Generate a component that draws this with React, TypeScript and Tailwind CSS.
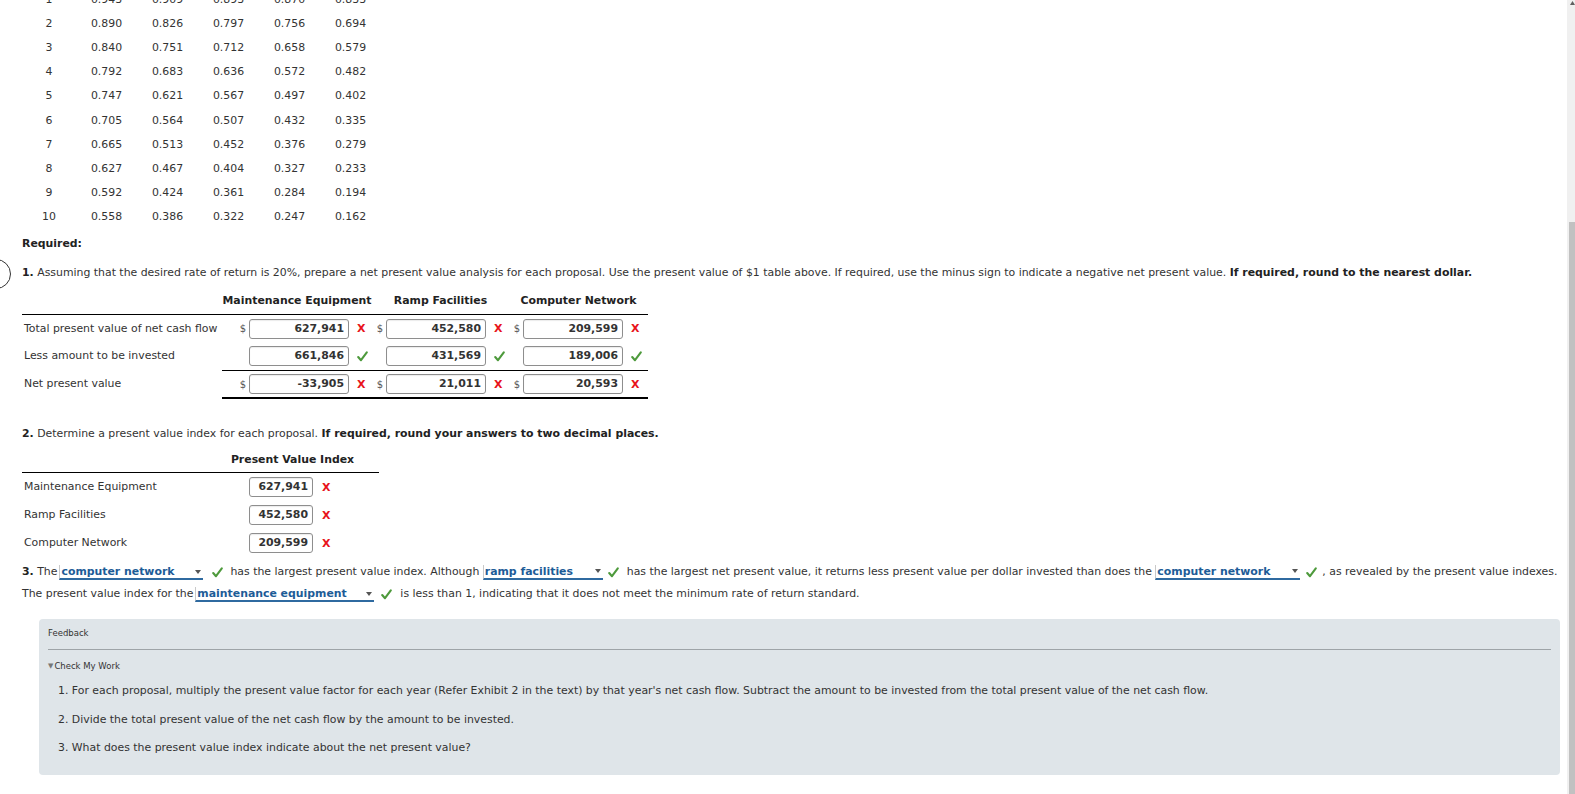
import React from "react";

const years: [string, string[]][] = [
  ["1", ["0.943", "0.909", "0.893", "0.870", "0.833"]],
  ["2", ["0.890", "0.826", "0.797", "0.756", "0.694"]],
  ["3", ["0.840", "0.751", "0.712", "0.658", "0.579"]],
  ["4", ["0.792", "0.683", "0.636", "0.572", "0.482"]],
  ["5", ["0.747", "0.621", "0.567", "0.497", "0.402"]],
  ["6", ["0.705", "0.564", "0.507", "0.432", "0.335"]],
  ["7", ["0.665", "0.513", "0.452", "0.376", "0.279"]],
  ["8", ["0.627", "0.467", "0.404", "0.327", "0.233"]],
  ["9", ["0.592", "0.424", "0.361", "0.284", "0.194"]],
  ["10", ["0.558", "0.386", "0.322", "0.247", "0.162"]],
];

function Cross() {
  return <span className="text-[11px] font-bold leading-none text-[#e8141b]">X</span>;
}

function Check() {
  return (
    <svg width="11" height="11" viewBox="0 0 11 11" className="inline-block">
      <path d="M1.2 6 L4 9.2 L9.8 1.3" fill="none" stroke="#4e9a3c" strokeWidth="2.1" strokeLinecap="round" strokeLinejoin="round" />
    </svg>
  );
}

function Box({ v, w }: { v: string; w: string }) {
  return (
    <div className={`${w} h-[20px] rounded-[3px] border border-[#8e8e8e] bg-white pr-[4px] text-right font-bold leading-[18px] text-[#333] shadow-[inset_0_1px_1px_rgba(0,0,0,0.08)]`}>
      {v}
    </div>
  );
}

function MoneyRow({ label, vals, ok, dollar, h }: { label: string; vals: string[]; ok: boolean; dollar: boolean; h: string }) {
  return (
    <div className={`grid w-[626px] grid-cols-[200px_27px_100px_23px_14px_100px_23px_14px_100px_25px] items-center ${h}`}>
      <div className="pl-[2px]">{label}</div>
      {vals.map((v, i) => (
        <React.Fragment key={i}>
          <div className="pr-[3px] text-right text-[10px] text-[#555]">{dollar ? "$" : ""}</div>
          <Box v={v} w="w-[100px]" />
          <div className="flex items-center pl-[8px]">{ok ? <Check /> : <Cross />}</div>
        </React.Fragment>
      ))}
    </div>
  );
}

function Drop({ label, w }: { label: string; w: string }) {
  return (
    <span className={`inline-flex ${w} h-[15px] items-center justify-between border-b-2 border-l border-b-[#2f6aa0] border-l-[#c9c9c9] pl-[1px] pr-[2px] font-bold leading-[13px] text-[#1d5c97]`}>
      <span>{label}</span>
      <svg width="6" height="4" viewBox="0 0 6 4">
        <path d="M0 0 L6 0 L3 4 Z" fill="#555" />
      </svg>
    </span>
  );
}

export default function App() {
  return (
    <div className="flex h-[794px] w-[1575px] overflow-hidden bg-white font-['DejaVu_Sans',sans-serif] text-[10.9px] text-[#333]">
      <main className="relative flex flex-1 flex-col pl-[22px]">
        {/* present value table */}
        <div className="mt-[-12px] flex flex-col">
          {years.map(([y, vals]) => (
            <div key={y} className="flex h-[24.125px] items-center">
              <div className="w-[54px] text-center">{y}</div>
              {vals.map((v, i) => (
                <div key={i} className="w-[61px] text-center">{v}</div>
              ))}
            </div>
          ))}
        </div>

        <div className="mt-[7px] font-bold leading-[16px] text-[#222]">Required:</div>

        <div className="relative mt-[13px] leading-[16px]">
          <div className="absolute left-[-41px] top-[-6px] h-[30px] w-[30px] rounded-full border-[1.5px] border-[#333]" />
          <span className="font-bold text-[#222]">1.</span> Assuming that the desired rate of return is 20%, prepare a net present value analysis for each proposal. Use the present value of $1 table above. If required, use the minus sign to indicate a negative net present value.{" "}
          <span className="font-bold text-[#222]">If required, round to the nearest dollar.</span>
        </div>

        {/* table 1 */}
        <div className="mt-[11px] flex flex-col">
          <div className="grid h-[23px] w-[626px] grid-cols-[200px_150px_137px_139px] border-b border-black pt-[1px] font-bold leading-[16px] text-[#222]">
            <div />
            <div className="text-center">Maintenance Equipment</div>
            <div className="text-center">Ramp Facilities</div>
            <div className="text-center">Computer Network</div>
          </div>
          <MoneyRow label="Total present value of net cash flow" vals={["627,941", "452,580", "209,599"]} ok={false} dollar h="h-[27px]" />
          <MoneyRow label="Less amount to be invested" vals={["661,846", "431,569", "189,006"]} ok dollar={false} h="h-[28px]" />
          <div className="ml-[200px] h-px w-[426px] bg-black" />
          <MoneyRow label="Net present value" vals={["-33,905", "21,011", "20,593"]} ok={false} dollar h="h-[26px]" />
          <div className="ml-[200px] h-[2px] w-[426px] bg-black" />
        </div>

        {/* section 2 */}
        <div className="mt-[27px] leading-[16px]">
          <span className="font-bold text-[#222]">2.</span> Determine a present value index for each proposal.{" "}
          <span className="font-bold text-[#222]">If required, round your answers to two decimal places.</span>
        </div>
        <div className="mt-[9px] flex flex-col">
          <div className="grid h-[22px] w-[357px] grid-cols-[200px_141px_16px] border-b border-black pt-[1px] font-bold leading-[16px] text-[#222]">
            <div />
            <div className="text-center">Present Value Index</div>
            <div />
          </div>
          {[
            ["Maintenance Equipment", "627,941", "h-[28px]"],
            ["Ramp Facilities", "452,580", "h-[28px]"],
            ["Computer Network", "209,599", "h-[28px]"],
          ].map(([l, v, h]) => (
            <div key={l} className={`grid grid-cols-[200px_27px_64px_40px] items-center ${h}`}>
              <div className="pl-[2px]">{l}</div>
              <div />
              <Box v={v} w="w-[64px]" />
              <div className="flex items-center pl-[9px]">
                <Cross />
              </div>
            </div>
          ))}
        </div>

        {/* section 3 */}
        <div className="mt-[4px] flex flex-col">
          <div className="flex h-[22px] items-center whitespace-pre">
            <span className="font-bold text-[#222]">3.</span>
            <span> The</span>
            <span className="ml-[2px]"><Drop label="computer network" w="w-[144px]" /></span>
            <span className="ml-[9px] flex items-center"><Check /></span>
            <span className="ml-[7px]">has the largest present value index. Although </span>
            <Drop label="ramp facilities" w="w-[120px]" />
            <span className="ml-[5px] flex items-center"><Check /></span>
            <span className="ml-[8px]">has the largest net present value, it returns less present value per dollar invested than does the </span>
            <Drop label="computer network" w="w-[145px]" />
            <span className="ml-[6px] flex items-center"><Check /></span>
            <span className="ml-[5px]">, as revealed by the present value indexes.</span>
          </div>
          <div className="flex h-[22px] items-center whitespace-pre">
            <span>The present value index for the</span>
            <span className="ml-[2px]"><Drop label="maintenance equipment" w="w-[179px]" /></span>
            <span className="ml-[7px] flex items-center"><Check /></span>
            <span className="ml-[8px]">is less than 1, indicating that it does not meet the minimum rate of return standard.</span>
          </div>
        </div>

        {/* feedback */}
        <div className="ml-[17px] mt-[14px] flex h-[156px] w-[1521px] flex-col rounded-[4px] bg-[#dfe5e9] px-[9px]">
          <div className="pt-[8px] text-[8.5px] leading-[12px]">Feedback</div>
          <div className="mt-[10px] h-px bg-[#9ea4a8]" />
          <div className="mt-[10px] flex items-center text-[8.5px] leading-[12px]">
            <span className="mr-[1px] text-[7px] text-[#777]">▼</span>Check My Work
          </div>
          <div className="ml-[10px] mt-[11px] flex flex-col gap-[12.5px] leading-[16px]">
            <div>1. For each proposal, multiply the present value factor for each year (Refer Exhibit 2 in the text) by that year's net cash flow. Subtract the amount to be invested from the total present value of the net cash flow.</div>
            <div>2. Divide the total present value of the net cash flow by the amount to be invested.</div>
            <div>3. What does the present value index indicate about the net present value?</div>
          </div>
        </div>
      </main>

      {/* scrollbar */}
      <div className="relative h-full w-[8px] bg-[#f0f0f0]">
        <svg width="5" height="4" viewBox="0 0 5 4" className="absolute left-[3px] top-[1px]">
          <path d="M0 4 L5 4 L2.5 0 Z" fill="#606060" />
        </svg>
        <div className="absolute bottom-0 left-[2px] right-0 top-[222px] bg-[#c1c1c1]" />
      </div>
    </div>
  );
}
